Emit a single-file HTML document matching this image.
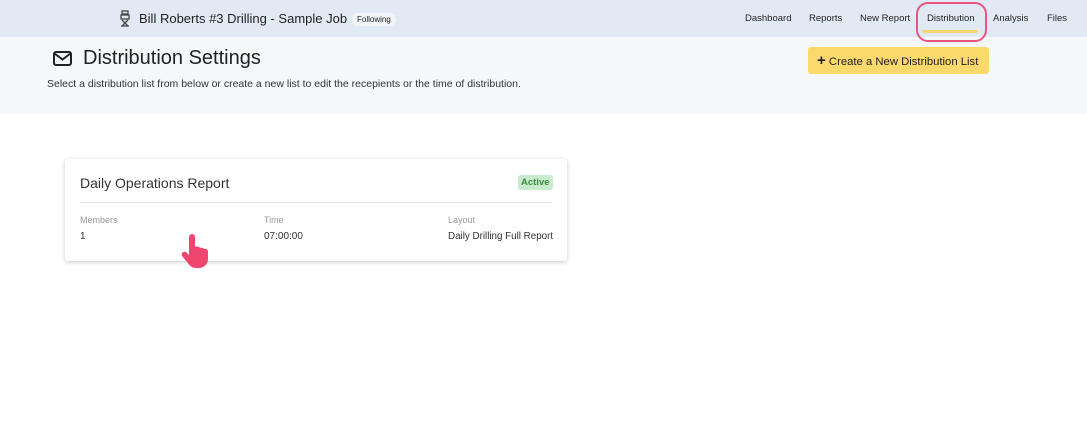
<!DOCTYPE html>
<html><head><style>
*{margin:0;padding:0;box-sizing:border-box}
body{width:1087px;height:438px;background:#fff;font-family:"Liberation Sans",sans-serif;color:#222;position:relative;overflow:hidden}
.top{position:absolute;left:0;top:0;width:1087px;height:37px;background:#e1eaf4}
.hdr{position:absolute;left:0;top:37px;width:1087px;height:77px;background:#f5f7fa}
.a{position:absolute;white-space:nowrap}
.nav{font-size:9.5px;color:#222;top:13px}
</style></head><body>
<div class="top"></div>
<div class="hdr"></div>
<svg class="a" style="left:120px;top:10px" width="10" height="17" viewBox="0 0 10 17"><g fill="none" stroke="#444" stroke-width="1.3"><rect x="2" y="1" width="6" height="3"/><rect x="1" y="5" width="8" height="4"/><path d="M2 10l6 6M8 10l-6 6M1 16h8"/></g></svg>
<div class="a" style="left:139px;top:11px;font-size:13px;color:#222">Bill Roberts #3 Drilling - Sample Job</div>
<div class="a" style="left:352px;top:13px;font-size:8px;background:#f2f4f7;border-radius:6px;padding:2px 5px;color:#222">Following</div>
<div class="a nav" style="left:745px">Dashboard</div>
<div class="a nav" style="left:809px">Reports</div>
<div class="a nav" style="left:860px">New Report</div>
<div class="a nav" style="left:927px">Distribution</div>
<div class="a nav" style="left:993px">Analysis</div>
<div class="a nav" style="left:1047px">Files</div>
<div class="a" style="left:922px;top:30px;width:56px;height:3px;background:#f3d776;border-radius:2px"></div>
<div class="a" style="left:916px;top:2px;width:71px;height:40px;border:2px solid #e8557f;border-radius:12px"></div>
<svg class="a" style="left:53px;top:51px" width="19" height="15" viewBox="0 0 19 15"><rect x="1" y="1" width="17" height="13" rx="2" fill="none" stroke="#222" stroke-width="2"/><path d="M1.5 2.5l8 6 8-6" fill="none" stroke="#222" stroke-width="2"/></svg>
<div class="a" style="left:83px;top:47px;font-size:20px;color:#222">Distribution Settings</div>
<div class="a" style="left:47px;top:78px;font-size:10.5px;color:#333">Select a distribution list from below or create a new list to edit the recepients or the time of distribution.</div>
<div class="a" style="left:808px;top:47px;width:181px;height:27px;background:#fbd96b;border-radius:3px;font-size:11.3px;color:#222;line-height:27px;padding-left:9px"><b style="font-size:15px">+</b> Create a New Distribution List</div>
<div class="a" style="left:65px;top:159px;width:502px;height:102px;background:#fff;border-radius:3px;box-shadow:0 1px 4px rgba(0,0,0,.22)"></div>
<div class="a" style="left:80px;top:175px;font-size:14px;color:#333">Daily Operations Report</div>
<div class="a" style="left:518px;top:175px;font-size:9.5px;font-weight:bold;color:#3d8a46;background:#c9ebcd;border-radius:3px;padding:2px 3px">Active</div>
<div class="a" style="left:80px;top:202px;width:472px;height:1px;background:#e5e5e5"></div>
<div class="a" style="left:80px;top:215px;font-size:9px;color:#999">Members</div>
<div class="a" style="left:264px;top:215px;font-size:9px;color:#999">Time</div>
<div class="a" style="left:448px;top:215px;font-size:9px;color:#999">Layout</div>
<div class="a" style="left:80px;top:231px;font-size:10px;color:#333">1</div>
<div class="a" style="left:264px;top:231px;font-size:10px;color:#333">07:00:00</div>
<div class="a" style="left:448px;top:231px;font-size:9.8px;color:#333">Daily Drilling Full Report</div>
<svg class="a" style="left:180px;top:233px" width="34" height="36" viewBox="0 0 34 36"><path d="M9 4a3 3 0 016 0v10l2-.5a3 3 0 013 1.5 3 3 0 014 1 3 3 0 014 2v8c0 5-4 9-9 9h-3c-4 0-6-2-9-6l-5-6a3 3 0 014-4l3 3V4z" fill="#f0456f"/></svg>
</body></html>
